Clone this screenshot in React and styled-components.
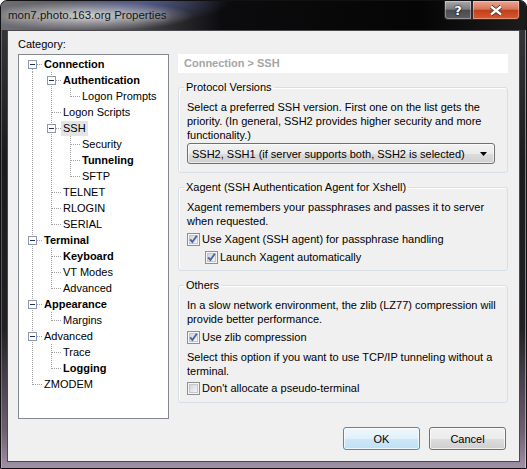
import React from "react";
import styled, { createGlobalStyle } from "styled-components";

const GlobalStyle = createGlobalStyle`
  html, body {
    margin: 0;
    padding: 0;
    background: #fff;
  }
  body {
    width: 527px;
    height: 469px;
    overflow: hidden;
    font-family: "Liberation Sans", Arial, sans-serif;
    font-size: 11px;
    color: #000;
  }
`;

const Window = styled.div`
  width: 527px;
  height: 469px;
  box-sizing: border-box;
  display: flex;
  flex-direction: column;
  border: 1px solid #111;
  border-radius: 7px 7px 0 0;
  overflow: hidden;
  background: linear-gradient(180deg, #3a3a3f 0%, #1b1b1d 35%, #222024 70%, #6d5f72 92%, #a090a6 100%);
  box-shadow: inset 1px 0 0 rgba(255, 255, 255, 0.25), inset -1px 0 0 rgba(255, 255, 255, 0.45);
`;

const TitleBar = styled.div`
  height: 29px;
  flex: none;
  display: flex;
  align-items: flex-start;
  justify-content: space-between;
  padding: 0 6px 0 7px;
  background:
    radial-gradient(ellipse 105px 15px at 88px 15px, rgba(225, 225, 228, 0.85), rgba(225, 225, 228, 0) 100%),
    radial-gradient(ellipse 90px 22px at 140px 0px, rgba(90, 100, 170, 0.7), rgba(90, 100, 170, 0) 100%),
    linear-gradient(90deg, #6e6e74 0%, #4a4a50 25%, #0c0c0e 42%, #050505 80%, #1c1c1c 100%);
`;

const TitleText = styled.span`
  line-height: 29px;
  font-size: 11.5px;
  color: #151515;
  text-shadow: 0 0 6px rgba(235, 235, 235, 0.8);
`;

const Caption = styled.div`
  display: flex;
  height: 20px;
`;

const CaptionButton = styled.div`
  width: ${(p) => p.$w}px;
  height: 19px;
  box-sizing: border-box;
  display: flex;
  align-items: center;
  justify-content: center;
  border: 1px solid #2b2b2b;
  border-top: none;
  border-radius: ${(p) => (p.$close ? "0 0 4px 0" : "0 0 0 4px")};
  background: ${(p) =>
    p.$close
      ? "linear-gradient(180deg, #e9a796 0%, #d8765a 45%, #c2401c 52%, #d65a2e 100%)"
      : "linear-gradient(180deg, #a8a8ac 0%, #7d7d82 45%, #4b4b50 52%, #5d5d62 100%)"};
  box-shadow: inset 0 0 0 1px rgba(255, 255, 255, 0.35);
  color: #fff;
  font-family: "DejaVu Sans", sans-serif;
  font-weight: bold;
  font-size: 13px;
  text-shadow: 0 0 2px #000, 0 0 1px #000;
`;

const Frame = styled.div`
  flex: 1;
  display: flex;
  padding: 0 6px 6px 6px;
`;

const Client = styled.div`
  flex: 1;
  display: flex;
  flex-direction: column;
  background: #f0f0f0;
  border: 1px solid #4a4a4e;
  padding: 6px 11px 0 10px;
`;

const CategoryLabel = styled.div`
  line-height: 14px;
  margin-bottom: 3px;
`;

const Main = styled.div`
  display: flex;
  gap: 9px;
`;

const TreeBox = styled.div`
  width: 151px;
  height: 365px;
  box-sizing: border-box;
  background: #fff;
  border: 1px solid #828790;
  padding: 1px 0 0 4px;
`;

const TreeRow = styled.div`
  display: flex;
  height: 16px;
  align-items: center;
`;

const TreeLabel = styled.span`
  padding: 0 2px;
  height: 15px;
  line-height: 15px;
  font-weight: ${(p) => (p.$bold ? "bold" : "normal")};
  background: ${(p) => (p.$selected ? "#e4e4e4" : "transparent")};
  white-space: nowrap;
`;

const RightPane = styled.div`
  width: 330px;
  display: flex;
  flex-direction: column;
  gap: 7px;
`;

const PageHeader = styled.div`
  height: 19px;
  background: #fff;
  line-height: 19px;
  padding-left: 6px;
  font-weight: bold;
  color: #a5a5a5;
`;

const Group = styled.fieldset`
  margin: 0;
  min-inline-size: 0;
  padding: 6px 8px ${(p) => p.$bottom}px 8px;
  border: 1px solid #d5dfe5;
  border-radius: 3px;
  box-shadow: inset 1px 1px 0 #fff;
`;

const Legend = styled.legend`
  padding: 0 2px;
  margin-left: -3px;
  line-height: 14px;
`;

const Note = styled.p`
  margin: ${(p) => p.$top || 0}px 0 0 0;
  line-height: 14px;
  white-space: nowrap;
`;

const Select = styled.div`
  margin-top: 1px;
  width: 308px;
  height: 21px;
  box-sizing: border-box;
  display: flex;
  align-items: center;
  justify-content: space-between;
  padding: 0 7px 0 4px;
  border: 1px solid #707070;
  border-radius: 3px;
  background: linear-gradient(180deg, #f2f2f2 0%, #ebebeb 50%, #dddddd 51%, #cfcfcf 100%);
  box-shadow: inset 0 0 0 1px rgba(255, 255, 255, 0.6);
`;

const CheckRow = styled.label`
  display: flex;
  align-items: center;
  gap: 2px;
  height: 18px;
  margin-top: ${(p) => p.$top}px;
  margin-left: ${(p) => p.$indent || 0}px;
`;

const ButtonBar = styled.div`
  display: flex;
  justify-content: flex-end;
  gap: 9px;
  margin-top: 8px;
  padding-right: 2px;
`;

const Button = styled.div`
  width: 77px;
  height: 23px;
  box-sizing: border-box;
  display: flex;
  align-items: center;
  justify-content: center;
  border-radius: 3px;
  border: 1px solid ${(p) => (p.$default ? "#3c8fd0" : "#707070")};
  background: ${(p) =>
    p.$default
      ? "linear-gradient(180deg, #eef7fd 0%, #e0f1fb 50%, #cde8f7 51%, #bfe0f3 100%)"
      : "linear-gradient(180deg, #f2f2f2 0%, #ebebeb 50%, #dddddd 51%, #cfcfcf 100%)"};
  box-shadow: inset 0 0 0 1px rgba(255, 255, 255, 0.7);
`;

const tree = [
  {
    label: "Connection",
    bold: true,
    children: [
      { label: "Authentication", bold: true, children: [{ label: "Logon Prompts" }] },
      { label: "Logon Scripts" },
      {
        label: "SSH",
        selected: true,
        children: [{ label: "Security" }, { label: "Tunneling", bold: true }, { label: "SFTP" }],
      },
      { label: "TELNET" },
      { label: "RLOGIN" },
      { label: "SERIAL" },
    ],
  },
  {
    label: "Terminal",
    bold: true,
    children: [{ label: "Keyboard", bold: true }, { label: "VT Modes" }, { label: "Advanced" }],
  },
  { label: "Appearance", bold: true, children: [{ label: "Margins" }] },
  { label: "Advanced", children: [{ label: "Trace" }, { label: "Logging", bold: true }] },
  { label: "ZMODEM" },
];

function flatten(nodes, guides = [], out = []) {
  nodes.forEach((n, i) => {
    const last = i === nodes.length - 1;
    const first = guides.length === 0 && i === 0;
    out.push({ ...n, guides, last, first });
    if (n.children) flatten(n.children, [...guides, !last], out);
  });
  return out;
}

const dots = { stroke: "#a0a0a0", strokeWidth: 1, strokeDasharray: "1 1" };

// one 19x16 cell of tree lines
function Glyph({ line, kind, expander }) {
  return (
    <svg width="19" height="16" viewBox="0 0 19 16" style={{ flex: "none" }}>
      {line && <line x1="9.5" y1="0" x2="9.5" y2="16" {...dots} />}
      {kind === "tee" && <line x1="9.5" y1="0" x2="9.5" y2="16" {...dots} />}
      {kind === "elbow" && <line x1="9.5" y1="0" x2="9.5" y2="9" {...dots} />}
      {kind === "first" && <line x1="9.5" y1="9" x2="9.5" y2="16" {...dots} />}
      {kind && <line x1="10" y1="8.5" x2="19" y2="8.5" {...dots} />}
      {expander && (
        <>
          <rect x="5.5" y="4.5" width="8" height="8" fill="#fff" stroke="#8e98a8" />
          <line x1="7" y1="8.5" x2="12" y2="8.5" stroke="#1e2f5c" />
        </>
      )}
    </svg>
  );
}

function CheckBox({ checked }) {
  return (
    <svg width="13" height="13" viewBox="0 0 13 13">
      <defs>
        <linearGradient id="cbfill" x1="0" y1="0" x2="1" y2="1">
          <stop offset="0" stopColor="#cfd3da" />
          <stop offset="1" stopColor="#f7f7f7" />
        </linearGradient>
      </defs>
      <rect x="0.5" y="0.5" width="12" height="12" fill="#f5f5f5" stroke="#8e8f8f" />
      <rect x="2.5" y="2.5" width="8" height="8" fill="url(#cbfill)" stroke="#c3c7cd" />
      {checked && (
        <path d="M3.2 6.3 L5.4 9 L9.8 2.8" fill="none" stroke="#4b63a0" strokeWidth="1.9" />
      )}
    </svg>
  );
}

function Tree() {
  const rows = flatten(tree);
  return (
    <TreeBox>
      {rows.map((r, i) => (
        <TreeRow key={i}>
          {r.guides.map((g, j) => (
            <Glyph key={j} line={g} />
          ))}
          <Glyph kind={r.first ? "first" : r.last ? "elbow" : "tee"} expander={!!r.children} />
          <TreeLabel $bold={r.bold} $selected={r.selected}>
            {r.label}
          </TreeLabel>
        </TreeRow>
      ))}
    </TreeBox>
  );
}

export default function App() {
  return (
    <>
      <GlobalStyle />
      <Window>
        <TitleBar>
          <TitleText>mon7.photo.163.org Properties</TitleText>
          <Caption>
            <CaptionButton $w={28}>?</CaptionButton>
            <CaptionButton $w={48} $close>
              <svg width="14" height="11" viewBox="0 0 14 11">
                <path d="M2 1.5 L12 9.5 M12 1.5 L2 9.5" stroke="#3a2a25" strokeWidth="4" />
                <path d="M2 1.5 L12 9.5 M12 1.5 L2 9.5" stroke="#fff" strokeWidth="2.4" />
              </svg>
            </CaptionButton>
          </Caption>
        </TitleBar>
        <Frame>
          <Client>
            <CategoryLabel>Category:</CategoryLabel>
            <Main>
              <Tree />
              <RightPane>
                <PageHeader>Connection &gt; SSH</PageHeader>
                <Group $bottom={8}>
                  <Legend>Protocol Versions</Legend>
                  <Note>
                    Select a preferred SSH version. First one on the list gets the
                    <br />
                    priority. (In general, SSH2 provides higher security and more
                    <br />
                    functionality.)
                  </Note>
                  <Select>
                    <span>SSH2, SSH1 (if server supports both, SSH2 is selected)</span>
                    <svg width="7" height="4" viewBox="0 0 7 4">
                      <path d="M0 0 H7 L3.5 4 Z" fill="#000" />
                    </svg>
                  </Select>
                </Group>
                <Group $bottom={4}>
                  <Legend>Xagent (SSH Authentication Agent for Xshell)</Legend>
                  <Note>
                    Xagent remembers your passphrases and passes it to server
                    <br />
                    when requested.
                  </Note>
                  <CheckRow $top={2}>
                    <CheckBox checked />
                    <span>Use Xagent (SSH agent) for passphrase handling</span>
                  </CheckRow>
                  <CheckRow $top={0} $indent={18}>
                    <CheckBox checked />
                    <span>Launch Xagent automatically</span>
                  </CheckRow>
                </Group>
                <Group $bottom={5}>
                  <Legend>Others</Legend>
                  <Note>
                    In a slow network environment, the zlib (LZ77) compression will
                    <br />
                    provide better performance.
                  </Note>
                  <CheckRow $top={2}>
                    <CheckBox checked />
                    <span>Use zlib compression</span>
                  </CheckRow>
                  <Note $top={4}>
                    Select this option if you want to use TCP/IP tunneling without a
                    <br />
                    terminal.
                  </Note>
                  <CheckRow $top={1}>
                    <CheckBox />
                    <span>Don't allocate a pseudo-terminal</span>
                  </CheckRow>
                </Group>
              </RightPane>
            </Main>
            <ButtonBar>
              <Button $default>OK</Button>
              <Button>Cancel</Button>
            </ButtonBar>
          </Client>
        </Frame>
      </Window>
    </>
  );
}
